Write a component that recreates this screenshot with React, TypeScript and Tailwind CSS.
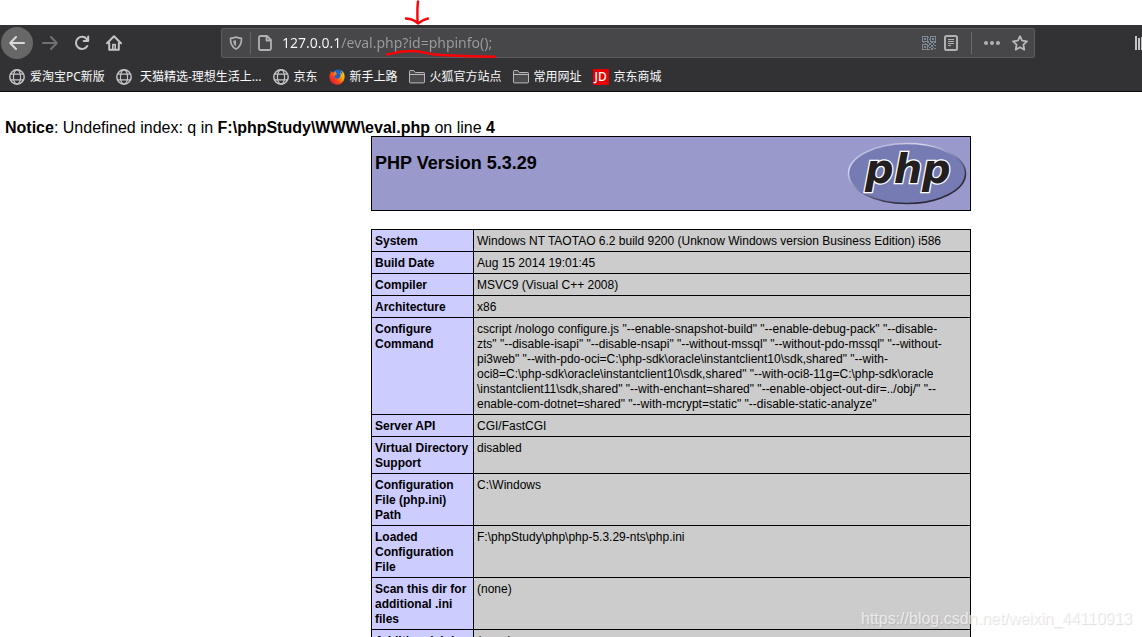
import type { ReactNode } from "react";

function GlobeIcon() {
  return (
    <svg className="size-4 shrink-0" viewBox="0 0 16 16" fill="none" stroke="#c4c4c6" strokeWidth="1.2" aria-hidden="true">
      <circle cx="8" cy="8" r="7.2" strokeWidth="1.5" />
      <ellipse cx="8" cy="8" rx="3.6" ry="7.2" />
      <path d="M1.5 5.2h13M1.5 10.8h13" />
    </svg>
  );
}

function FolderIcon() {
  return (
    <svg className="size-4 shrink-0" viewBox="0 0 16 16" fill="#4a4a4c" stroke="#b8b8ba" aria-hidden="true">
      <path d="M.5 13V2.2q0-.7.7-.7h3.6l1.5 2h8.5q.7 0 .7.7V13q0 .9-.9.9H1.4q-.9 0-.9-.9zM.8 5.5h14.4" />
    </svg>
  );
}

function FirefoxIcon() {
  return (
    <svg className="size-4 shrink-0" viewBox="0 0 16 16" aria-hidden="true">
      <defs>
        <linearGradient id="flame" x1="1" y1="0" x2="0.1" y2="0.8">
          <stop offset="0" stopColor="#ffe226" />
          <stop offset="0.35" stopColor="#ffae0b" />
          <stop offset="0.7" stopColor="#f5441b" />
          <stop offset="1" stopColor="#e01b3b" />
        </linearGradient>
      </defs>
      <circle cx="9" cy="6.4" r="6" fill="#1b63c6" />
      <path
        d="M1.6 1.800l1.700 1.800 1.900-.2L6.600 2l.3 1.900 1.400 1-2 1 .2 1.200-1.200 1.200c.7 1.600 3 2 4.800.8 1.700-1.300 2.100-3.500.9-5.600 1.700.5 2.200 1.700 2.300 2.400.5-1.800-.5-3.600-1.600-4.600 3 1.300 4 3.800 3.900 6.700-.3 4.600-3.400 7.700-7.500 7.700C3.900 15.700.5 12.500.4 8.300.3 5.900.8 4.700 1.700 3.900z"
        fill="url(#flame)"
      />
    </svg>
  );
}

function JdIcon() {
  return (
    <span className="flex size-4 shrink-0 items-center justify-center bg-[#e60000] text-xs leading-4 font-medium text-white" aria-hidden="true">
      JD
    </span>
  );
}

function NavButton({ label, className = "", children }: { label: string; className?: string; children: ReactNode }) {
  return (
    <button type="button" aria-label={label} className={`flex size-8 shrink-0 items-center justify-center rounded-full ${className}`}>
      <svg className="size-4" viewBox="0 0 16 16" fill="none" stroke="currentColor" strokeWidth="2" strokeLinecap="round" strokeLinejoin="round" aria-hidden="true">
        {children}
      </svg>
    </button>
  );
}

function QrIcon() {
  return (
    <svg className="size-[14px]" viewBox="0 0 14 14" fill="#7d8995" aria-hidden="true">
      <path fillRule="evenodd" d="M0 0h6v6H0zM1 1v4h4V1zM8 0h6v6H8zM9 1v4h4V1zM0 8h6v6H0zM1 9v4h4V9z" />
      <path d="M2 2h2v2H2zM10 2h2v2h-2zM2 10h2v2H2zM6 1h1v1H6zM7 3h1v1H7zM6 5h1v1H6zM1 6h1v1H1zM3 7h1v1H3zM5 6h2v1H5zM7 7h2v2H7zM9 6h2v1H9zM12 6h2v1h-2zM11 7h1v2h-1zM6 9h1v2H6zM9 9h2v2H9zM12 9h2v1h-2zM7 11h2v1H7zM11 11h1v1h-1zM9 12h2v2H9zM12 12h2v1h-2zM6 13h2v1H6z" />
    </svg>
  );
}

function PhpLogo() {
  return (
    <svg className="h-[67px] w-[120px] shrink-0" viewBox="0 0 120 67" role="img" aria-label="PHP logo">
      <defs>
        <linearGradient id="rim" x1="0.1" y1="0" x2="0.8" y2="1">
          <stop offset="0" stopColor="#9fa3d0" />
          <stop offset="0.25" stopColor="#d5d7ec" />
          <stop offset="0.5" stopColor="#8589b5" />
          <stop offset="0.8" stopColor="#2f2c3c" />
          <stop offset="1" stopColor="#2b2938" />
        </linearGradient>
      </defs>
      <ellipse cx="60" cy="33.5" rx="58.5" ry="30" fill="#777bb3" stroke="url(#rim)" strokeWidth="1.6" />
      <text
        x="18"
        y="43"
        className="font-['DejaVu_Sans',sans-serif] text-[40px] font-bold italic"
        fill="#231f20"
        stroke="#ffffff"
        strokeWidth="2.6"
        paintOrder="stroke"
      >
        php
      </text>
    </svg>
  );
}

const bookmarks: { label: string; icon: ReactNode }[] = [
  { label: "爱淘宝PC新版", icon: <GlobeIcon /> },
  { label: "\u00a0天猫精选-理想生活上...", icon: <GlobeIcon /> },
  { label: "京东", icon: <GlobeIcon /> },
  { label: "新手上路", icon: <FirefoxIcon /> },
  { label: "火狐官方站点", icon: <FolderIcon /> },
  { label: "常用网址", icon: <FolderIcon /> },
  { label: "京东商城", icon: <JdIcon /> },
];

const rows: { name: string; value: string[] }[] = [
  { name: "System", value: ["Windows NT TAOTAO 6.2 build 9200 (Unknow Windows version Business Edition) i586"] },
  { name: "Build Date", value: ["Aug 15 2014 19:01:45"] },
  { name: "Compiler", value: ["MSVC9 (Visual C++ 2008)"] },
  { name: "Architecture", value: ["x86"] },
  {
    name: "Configure Command",
    value: [
      'cscript /nologo configure.js "--enable-snapshot-build" "--enable-debug-pack" "--disable-',
      'zts" "--disable-isapi" "--disable-nsapi" "--without-mssql" "--without-pdo-mssql" "--without-',
      'pi3web" "--with-pdo-oci=C:\\php-sdk\\oracle\\instantclient10\\sdk,shared" "--with-',
      'oci8=C:\\php-sdk\\oracle\\instantclient10\\sdk,shared" "--with-oci8-11g=C:\\php-sdk\\oracle',
      '\\instantclient11\\sdk,shared" "--with-enchant=shared" "--enable-object-out-dir=../obj/" "--',
      'enable-com-dotnet=shared" "--with-mcrypt=static" "--disable-static-analyze"',
    ],
  },
  { name: "Server API", value: ["CGI/FastCGI"] },
  { name: "Virtual Directory Support", value: ["disabled"] },
  { name: "Configuration File (php.ini) Path", value: ["C:\\Windows"] },
  { name: "Loaded Configuration File", value: ["F:\\phpStudy\\php\\php-5.3.29-nts\\php.ini"] },
  { name: "Scan this dir for additional .ini files", value: ["(none)"] },
  { name: "Additional .ini files parsed", value: ["(none)"] },
];

function BrowserChrome() {
  return (
    <header className="shrink-0 border-b border-[#0c0c0d] bg-[#323234] font-['Noto_Sans','Noto_Sans_CJK_SC',sans-serif]">
      <div className="flex h-9 items-center pl-px text-[#c4c4c6]">
        <NavButton label="Back" className="mr-px bg-[#676768] text-[#d8d8da]">
          <path d="M15 8H1.500M7 2L1.200 8 7 14" />
        </NavButton>
        <NavButton label="Forward" className="text-[#707072]">
          <path d="M1 8h13.500M9 2l5.800 6L9 14" />
        </NavButton>
        <NavButton label="Reload">
          <path d="M13 4.300A6.100 6.100 0 1 0 13.300 11M14.200 1.500V6h-4.500" />
        </NavButton>
        <NavButton label="Home">
          <path d="M1 8.300L8 1.300l7 7M3.200 8v6.800h9.600V8" />
          <path d="M6.800 14V9.500h2.400V14" strokeWidth="1.600" />
        </NavButton>
        <div className="ml-[91px] flex h-[30px] flex-1 items-center rounded-xs border border-[#5c5c5e] bg-[#474749]">
          <button type="button" aria-label="Tracking protection" className="flex w-7 justify-center">
            <svg className="size-[14px]" viewBox="0 0 14 14" fill="none" stroke="#b1b1b3" strokeWidth="1.700" aria-hidden="true">
              <path d="M7 1C5 2 3 2.200 1.500 2.300 1.300 7.500 2.500 11 7 13c4.500-2 5.700-5.500 5.500-10.700C11 2.200 9 2 7 1z" strokeLinejoin="round" />
              <path d="M7 4.200v6C5 9 4.300 7.500 4.200 4.800z" fill="#b1b1b3" stroke="none" />
            </svg>
          </button>
          <span className="h-[22px] w-px bg-[#62626a]" />
          <button type="button" aria-label="Site information" className="flex w-7 justify-center">
            <svg className="size-4" viewBox="0 0 16 16" fill="none" stroke="#b1b1b3" strokeWidth="1.800" strokeLinejoin="round" aria-hidden="true">
              <path d="M2 2.500q0-1.500 1.500-1.500H10l4 4v8.500q0 1.500-1.500 1.500h-9Q2 15 2 13.500zM9.500 1v4.500H14" />
            </svg>
          </button>
          <input
            aria-label="Address"
            defaultValue="127.0.0.1/eval.php?id=phpinfo();"
            className="ml-[3px] min-w-0 flex-1 bg-linear-to-r from-[#f9f9fa] from-[58px] to-[#9c9c9e] to-[58px] bg-clip-text text-sm leading-5 text-transparent outline-none"
          />
          <button type="button" aria-label="QR code">
            <QrIcon />
          </button>
          <button type="button" aria-label="Reader view" className="ml-2">
            <svg className="h-4 w-[14px]" viewBox="0 0 14 16" fill="none" stroke="#b1b1b3" aria-hidden="true">
              <rect x="1" y="1" width="12" height="14" rx="1.500" strokeWidth="2" />
              <path d="M4 4.500h6M4 6.500h6M4 8.500h6M4 10.500h3" />
            </svg>
          </button>
          <span className="ml-[13px] h-[22px] w-px bg-[#69696b]" />
          <button type="button" aria-label="Page actions" className="ml-3">
            <svg className="size-4" viewBox="0 0 16 16" fill="#b1b1b3" aria-hidden="true">
              <circle cx="2" cy="8" r="2" />
              <circle cx="8" cy="8" r="2" />
              <circle cx="14" cy="8" r="2" />
            </svg>
          </button>
          <button type="button" aria-label="Bookmark this page" className="mr-[6px] ml-3">
            <svg className="size-4" viewBox="0 0 16 16" fill="none" stroke="#b8b8ba" strokeWidth="1.800" strokeLinejoin="round" aria-hidden="true">
              <path d="M8 1.200l2.100 4.500 4.900.6-3.600 3.400.9 4.900L8 12.200l-4.300 2.400.9-4.900L1 6.300l4.900-.6z" />
            </svg>
          </button>
        </div>
        <button type="button" aria-label="Library" className="ml-[100px] w-[7px] shrink-0 overflow-hidden">
          <svg className="h-4 w-4" viewBox="0 0 16 16" fill="none" stroke="#c4c4c6" strokeWidth="2" aria-hidden="true">
            <path d="M1 1v14M4 3v12M7 2v13M10 3l4 12" />
          </svg>
        </button>
      </div>
      <nav aria-label="Bookmarks" className="flex h-[30px] items-center gap-[11px] pt-0.5 pl-[9px] text-xs whitespace-nowrap text-[#f9f9fa]">
        {bookmarks.map((b) => (
          <a key={b.label} href="#" className="flex items-center gap-[5px]">
            {b.icon}
            <span>{b.label}</span>
          </a>
        ))}
      </nav>
    </header>
  );
}

function PhpInfo() {
  return (
    <div className="grid grid-cols-[371fr_600px_171fr]">
      <section className="col-start-2 text-xs leading-[15px]">
        <div className="mb-[18px] flex items-start justify-between border border-black bg-[#9999cc] p-[3px]">
          <h1 className="pt-[13px] text-lg leading-[21px] font-bold">PHP Version 5.3.29</h1>
          <PhpLogo />
        </div>
        <table className="w-full table-fixed border-collapse">
          <colgroup>
            <col className="w-[102px]" />
            <col />
          </colgroup>
          <tbody>
            {rows.map((row) => (
              <tr key={row.name} className="align-top">
                <th scope="row" className="border border-black bg-[#ccccff] px-[3px] pt-1 pb-0.5 text-left font-bold">
                  {row.name}
                </th>
                <td className="border border-black bg-[#cccccc] px-[3px] pt-1 pb-0.5 whitespace-nowrap">
                  {row.value.map((line) => (
                    <div key={line}>{line}</div>
                  ))}
                </td>
              </tr>
            ))}
          </tbody>
        </table>
      </section>
    </div>
  );
}

export default function App() {
  return (
    <div className="relative flex h-screen flex-col overflow-hidden bg-white pt-[25px] font-['Liberation_Sans',Arial,sans-serif] text-black">
      <BrowserChrome />
      <main className="min-h-0 flex-1 overflow-hidden pt-7">
        <p className="pl-[5px] text-base leading-4">
          <b>Notice</b>: Undefined index: q in <b>F:\phpStudy\WWW\eval.php</b> on line <b>4</b>
        </p>
        <PhpInfo />
      </main>
      <svg
        className="pointer-events-none absolute top-0 left-[380px] h-[62px] w-[120px]"
        viewBox="380 0 120 62"
        fill="none"
        stroke="#fb0207"
        strokeLinecap="round"
        strokeLinejoin="round"
        aria-hidden="true"
      >
        <path d="M418 1.500C417 8 417.500 15 417.500 23M406 18.500c5 .3 9 2 12 5 3-2.500 6-4 10-5" strokeWidth="2.400" />
        <path d="M387 54.500c8-1.500 14-3.500 25-3.500 12 0 15 3.500 28 4 16 .7 34 1.500 55 1.800" strokeWidth="2.400" />
      </svg>
      <span className="pointer-events-none absolute right-[10px] bottom-2 text-base leading-5 text-white/65 [text-shadow:1px_1px_1px_rgba(120,120,120,0.25)]">
        https://blog.csdn.net/weixin_44110913
      </span>
    </div>
  );
}
